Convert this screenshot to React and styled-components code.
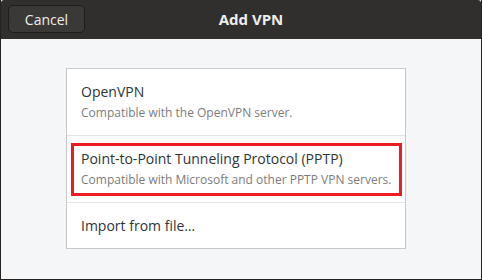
import React from "react";
import styled, { createGlobalStyle } from "styled-components";

const GlobalStyle = createGlobalStyle`
  html, body {
    margin: 0;
    padding: 0;
    background: #2b2a28;
  }
  body {
    font-family: "Open Sans", "Noto Sans", sans-serif;
  }
`;

const options = [
  {
    title: "OpenVPN",
    desc: "Compatible with the OpenVPN server.",
  },
  {
    title: "Point-to-Point Tunneling Protocol (PPTP)",
    desc: "Compatible with Microsoft and other PPTP VPN servers.",
    marked: true,
  },
  {
    title: "Import from file…",
  },
];

const App = () => {
  return (
    <>
      <GlobalStyle />
      <Window>
        <HeaderBar>
          <CancelButton>Cancel</CancelButton>
          <Title>Add VPN</Title>
          <span />
        </HeaderBar>
        <Body>
          <List>
            {options.map((opt, index) => (
              <Row key={index} tall={!!opt.desc} last={index === options.length - 1}>
                {opt.marked ? (
                  <Highlight>
                    <RowTitle>{opt.title}</RowTitle>
                    <RowDesc>{opt.desc}</RowDesc>
                  </Highlight>
                ) : (
                  <Plain>
                    <RowTitle>{opt.title}</RowTitle>
                    {opt.desc && <RowDesc>{opt.desc}</RowDesc>}
                  </Plain>
                )}
              </Row>
            ))}
          </List>
        </Body>
      </Window>
    </>
  );
};

export default App;

const Window = styled.div`
  width: 482px;
  height: 280px;
  box-sizing: border-box;
  display: flex;
  flex-direction: column;
  background: #f5f6f7;
  border-left: 1px solid #232221;
  border-right: 1px solid #232221;
  border-bottom: 1px solid #232221;
  overflow: hidden;
`;

const HeaderBar = styled.div`
  height: 39px;
  flex-shrink: 0;
  display: grid;
  grid-template-columns: 1fr auto 1fr;
  align-items: center;
  padding: 0 7px;
  background: #302f2d;
  border-radius: 3px 3px 0 0;
`;

const CancelButton = styled.button`
  justify-self: start;
  width: 77px;
  height: 28px;
  margin-top: -1px;
  box-sizing: border-box;
  border: 1px solid #1e1d1c;
  border-radius: 5px;
  background: #3b3937;
  color: #eeeeec;
  font-family: "Open Sans", "Noto Sans", sans-serif;
  font-size: 14px;
  padding: 0;
  cursor: pointer;
`;

const Title = styled.div`
  color: #eeeeec;
  font-size: 15px;
  font-weight: 700;
  margin-top: -1px;
  margin-left: 20px;
`;

const Body = styled.div`
  flex: 1;
  display: flex;
  justify-content: flex-start;
  align-items: flex-start;
  padding: 29px 0 0 65px;
`;

const List = styled.div`
  width: 338px;
  background: #ffffff;
  border: 1px solid #c6c8cb;
`;

const Row = styled.div`
  height: ${(p) => (p.tall ? "66px" : "45px")};
  display: flex;
  flex-direction: column;
  border-bottom: ${(p) => (p.last ? "none" : "1px solid #e4e5e6")};
`;

const Plain = styled.div`
  flex: 1;
  display: flex;
  flex-direction: column;
  justify-content: center;
  padding: 0 14px;
`;

const Highlight = styled.div`
  flex: 1;
  display: flex;
  flex-direction: column;
  justify-content: center;
  margin: 7px 3px 6px 4px;
  padding: 0 7px;
  border: 3px solid #ec1c24;
`;

const RowTitle = styled.div`
  color: #2e3436;
  font-size: 14px;
  line-height: 20px;
`;

const RowDesc = styled.div`
  color: #7b7c7d;
  font-size: 12px;
  line-height: 20px;
  margin-top: 1px;
`;
